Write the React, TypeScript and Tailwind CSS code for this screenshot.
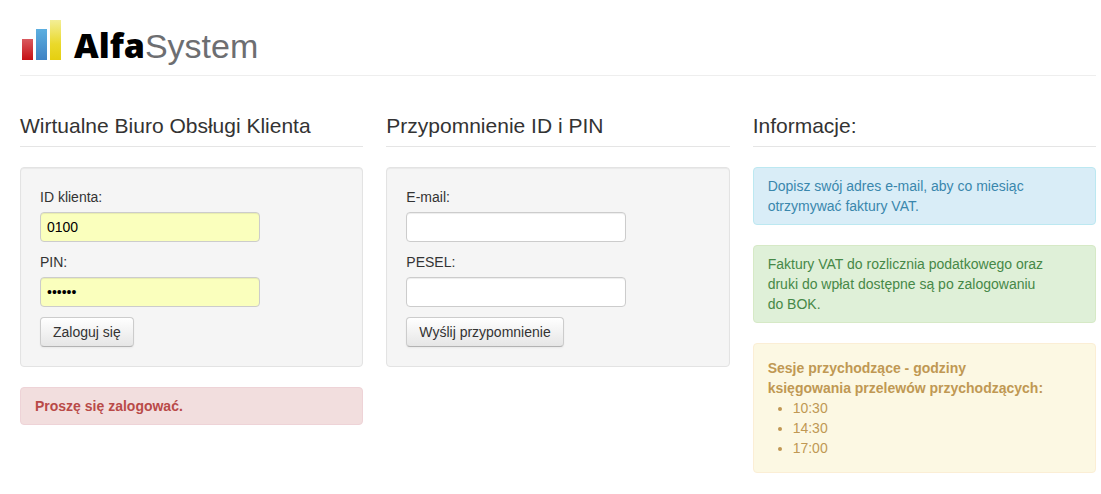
import type { InputHTMLAttributes, ReactNode } from "react";

function Logo() {
  return (
    <a href="#" className="flex items-end text-[34px] leading-[40px]" aria-label="AlfaSystem">
      <svg width="44" height="42" viewBox="0 0 44 42" className="mb-[6px]" aria-hidden="true">
        <defs>
          <linearGradient id="red" x1="0" y1="0" x2="0" y2="1">
            <stop offset="0" stopColor="#d95a5f" />
            <stop offset="1" stopColor="#c60f14" />
          </linearGradient>
          <linearGradient id="blue" x1="0" y1="0" x2="0" y2="1">
            <stop offset="0" stopColor="#5cafe0" />
            <stop offset="1" stopColor="#3f82c4" />
          </linearGradient>
          <linearGradient id="yellow" x1="0" y1="0" x2="0" y2="1">
            <stop offset="0" stopColor="#f3ee96" />
            <stop offset="0.6" stopColor="#ead92b" />
            <stop offset="1" stopColor="#e5cf10" />
          </linearGradient>
        </defs>
        <rect x="2" y="21" width="11" height="21" fill="url(#red)" />
        <rect x="16" y="11" width="11" height="31" fill="url(#blue)" />
        <rect x="30" y="2" width="11" height="40" fill="url(#yellow)" />
      </svg>
      <span className="ml-[10px] flex items-baseline">
        <span className="font-['Open_Sans',sans-serif] font-extrabold text-black">Alfa</span>
        <span className="text-[#6d6e71]">System</span>
      </span>
    </a>
  );
}

function Legend({ children }: { children: ReactNode }) {
  return (
    <h2 className="mb-5 border-b border-[#e5e5e5] text-[21px] leading-[40px]">{children}</h2>
  );
}

interface FieldProps extends InputHTMLAttributes<HTMLInputElement> {
  id: string;
  label: string;
  filled?: boolean;
}

function Field({ id, label, filled, ...rest }: FieldProps) {
  return (
    <div className="mb-[10px]">
      <label htmlFor={id} className="mb-[5px] block">
        {label}
      </label>
      <input
        id={id}
        className={`block h-[30px] w-[220px] max-w-full rounded border border-[#ccc] px-[6px] text-black shadow-[inset_0_1px_1px_rgba(0,0,0,0.075)] outline-none focus:border-[#52a8ec] ${
          filled ? "bg-[#faffbd]" : "bg-white"
        }`}
        {...rest}
      />
    </div>
  );
}

function Well({ children }: { children: ReactNode }) {
  return (
    <form
      onSubmit={(e) => e.preventDefault()}
      className="mb-5 rounded border border-[#e3e3e3] bg-[#f5f5f5] p-[19px] shadow-[inset_0_1px_1px_rgba(0,0,0,0.05)]"
    >
      {children}
    </form>
  );
}

function Button({ children }: { children: ReactNode }) {
  return (
    <button
      type="submit"
      className="block h-[30px] cursor-pointer rounded border border-[#ccc] border-b-[#b3b3b3] bg-linear-to-b from-white to-[#e6e6e6] px-3 shadow-[0_1px_2px_rgba(0,0,0,0.05)]"
    >
      {children}
    </button>
  );
}

const tones = {
  error: "border-[#eed3d7] bg-[#f2dede] text-[#b94a48] py-2",
  info: "border-[#bce8f1] bg-[#d9edf7] text-[#3a87ad] py-2",
  success: "border-[#d6e9c6] bg-[#dff0d8] text-[#468847] py-2",
  warning: "border-[#fbeed5] bg-[#fcf8e3] text-[#c09853] py-[14px]",
};

function Alert({ tone, children }: { tone: keyof typeof tones; children: ReactNode }) {
  return (
    <div className={`mb-5 rounded border pr-[44px] pl-[14px] ${tones[tone]}`}>{children}</div>
  );
}

export default function App() {
  return (
    <div className="bg-white pr-[5px] pl-5 font-['Liberation_Sans',Arial,sans-serif] text-sm leading-5 text-[#333]">
      <header className="mb-[30px] flex border-b border-[#eee] pt-[18px] pb-[9px]">
        <Logo />
      </header>
      <main className="grid grid-cols-3 gap-[23px]">
        <section>
          <Legend>Wirtualne Biuro Obsługi Klienta</Legend>
          <Well>
            <Field id="client-id" label="ID klienta:" type="text" defaultValue="0100" filled />
            <Field id="pin" label="PIN:" type="password" defaultValue="010010" filled />
            <Button>Zaloguj się</Button>
          </Well>
          <Alert tone="error">
            <strong>Proszę się zalogować.</strong>
          </Alert>
        </section>
        <section>
          <Legend>Przypomnienie ID i PIN</Legend>
          <Well>
            <Field id="email" label="E-mail:" type="text" />
            <Field id="pesel" label="PESEL:" type="text" />
            <Button>Wyślij przypomnienie</Button>
          </Well>
        </section>
        <section>
          <Legend>Informacje:</Legend>
          <Alert tone="info">Dopisz swój adres e-mail, aby co miesiąc otrzymywać faktury VAT.</Alert>
          <Alert tone="success">
            Faktury VAT do rozlicznia podatkowego oraz druki do wpłat dostępne są po zalogowaniu do
            BOK.
          </Alert>
          <Alert tone="warning">
            <strong>Sesje przychodzące - godziny księgowania przelewów przychodzących:</strong>
            <ul className="ml-[25px] list-disc">
              <li>10:30</li>
              <li>14:30</li>
              <li>17:00</li>
            </ul>
          </Alert>
        </section>
      </main>
    </div>
  );
}
